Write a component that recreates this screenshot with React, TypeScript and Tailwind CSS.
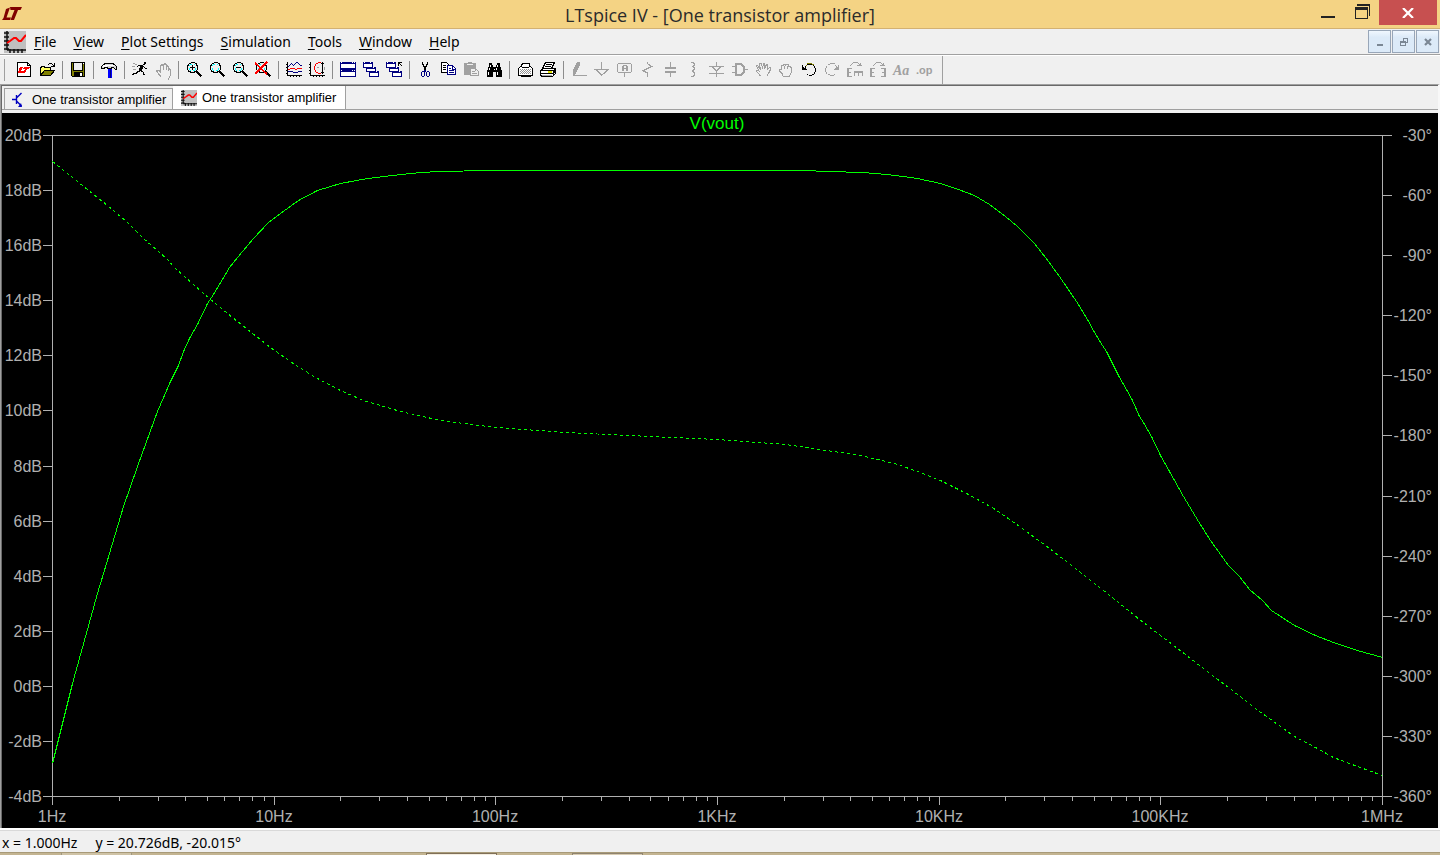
import type { ReactNode } from 'react';

interface Tool {
    label: string;
    icon: ReactNode;
    disabled?: boolean;
}

const GRAY = '#a0a0a0';
const NAVY = '#000080';

const Icon = ({ children }: { children: ReactNode }) => (
    <svg className="h-4 w-4" viewBox="0 0 16 16" fill="none" shapeRendering="crispEdges" overflow="visible" aria-hidden="true">
        {children}
    </svg>
);

const Lens = ({ children }: { children?: ReactNode }) => (
    <g transform="translate(1 0)">
        <path d="M3.5 .5h4M1.5 1.5h2M7.5 1.5h2M1.5 1.5v2M9.5 1.5v2M.5 3v5M10.5 3v5M1.5 8v2M9.5 8v2M2 9.5h2M7 9.5h2M3 10.5h5" stroke="#000" />
        <path d="M2 3h1v1h-1zM3 2h2v1h-2zM7 2h1v1h-1zM8 6h1v2h-1zM6 8h2v1h-2zM2 6h1v2h-1zM3 8h1v1h-1z" fill="#00ffff" />
        <path d="M9.5 9.5l5 5" stroke="#000" strokeWidth="2.4" />
        {children}
    </g>
);

const Cascade = () => (
    <>
        <path d="M.5 .5h9v5h-9zM3.5 5.5h9v4h-9zM6.5 9.5h9v5h-9z" fill="#fff" stroke={NAVY} />
        <path d="M0 0h10v2h-10zM3 5h10v2h-10zM6 9h10v2h-10z" fill={NAVY} />
        <path d="M1 .5h1M7 .5h1M10 5.5h1M13 9.5h1" stroke="#fff" />
    </>
);

const openHand = (
    <path d="M5.5 15v-1l-1-1-1-1-1-2-1-1v-1h2l2 2v-7h1v-1h1v1h1v5v-6h1v-1h1v1h1v6v-5h1v1h1v5v-3h1v1h1v6l-1 2-1 2v1" stroke={GRAY} />
);

const toolGroups: Tool[][] = [
    [
        {
            label: 'New Schematic',
            icon: (
                <>
                    <path d="M1.5 .5h10l3 3v11h-13z" fill="#fff" stroke="#000" />
                    <path d="M11.5 .5v3h3" stroke="#000" />
                    <path d="M4 5h3l-2 4h3l-1 2h-5zM8 5h6l-1 2h-2l-2 4h-2l2-4h-2z" fill="#f00" />
                </>
            ),
        },
        {
            label: 'Open',
            icon: (
                <>
                    <path d="M1.5 13.5v-8h1v-1h3v1h6v3" fill="#ffff80" stroke="#000" />
                    <path d="M2 6h9v2h-6l-3 5z" fill="#ffff60" />
                    <path d="M1.5 13.5l4-5h10l-4 5z" fill="#808000" stroke="#000" />
                    <path d="M9 2.5h1M10 1.5h3M13 2.5h1M14 3.5h2M15.5 1v3M12 4.5h4" stroke="#000" />
                </>
            ),
        },
    ],
    [
        {
            label: 'Save',
            icon: (
                <>
                    <path d="M1.5 .5h13v14h-12l-1-1z" fill="#808000" stroke="#000" />
                    <path d="M4 1h8v7h-8z" fill="#efefef" />
                    <path d="M3.5 1v7h9v-7" stroke="#000" />
                    <path d="M4 10h9v5h-9z" fill="#000" />
                    <path d="M10 11h2v3h-2z" fill="#fff" />
                    <path d="M13 1h1v1h-1z" fill="#fff" />
                </>
            ),
        },
    ],
    [
        {
            label: 'Control Panel',
            icon: (
                <>
                    <path d="M.5 4.5l2-2 2-1h7l2 1 2 2v3h-1l-2-2h-2v1h-4v-1h-2l-2 1h-2z" fill="#d8d8d8" stroke="#000" />
                    <path d="M2 3.5h11M2 4.5h4" stroke="#fff" />
                    <path d="M7 7h4v9h-4z" fill="#00f" />
                    <path d="M9.5 7v9" stroke="#000080" />
                </>
            ),
        },
    ],
    [
        {
            label: 'Run',
            icon: (
                <>
                    <path d="M12 0h2v2h-2z" fill="#000" />
                    <path d="M11 2.5h2M6 3.5h5M8 4.5h4M8 5.5h3M7 6.5h4M7 7.5h3M7 8.5h3M5 4.5h1M12 5.5h1M13 6.5h2M9 9.5h2M11.5 10v3M11 12.5h2M5 9.5h3M4 10.5h2M1 11.5h4M0 12.5h2" stroke="#000" />
                    <path d="M1 1.5h2M3 2.5h2M0 4.5h3M1 7.5h3" stroke={GRAY} />
                </>
            ),
        },
        { label: 'Halt', disabled: true, icon: openHand },
    ],
    [
        {
            label: 'Zoom In',
            icon: (
                <Lens>
                    <path d="M3 5.5h5M5.5 3v5" stroke="#000" />
                </Lens>
            ),
        },
        { label: 'Pan', icon: <Lens /> },
        {
            label: 'Zoom Out',
            icon: (
                <Lens>
                    <path d="M3 5.5h5" stroke="#000" />
                </Lens>
            ),
        },
        {
            label: 'Zoom to Fit',
            icon: (
                <Lens>
                    <path d="M-1 1l12 11M11 0l-12 12" stroke="#f00" strokeWidth="1.6" />
                </Lens>
            ),
        },
    ],
    [
        {
            label: 'Autorange',
            icon: (
                <>
                    <path d="M1.5 0v14M1 13.5h15M0 2.5h2M0 5.5h2M0 8.5h2M0 11.5h2M4.5 13v2M7.5 13v2M10.5 13v2M13.5 13v2" stroke="#000" />
                    <path d="M2 4.5h1M3 3.5h1M4 2.5h1M5 1.5h1M6 2.5h1M7 3.5h1M8 2.5h1M9 1.5h1M10 .5h2M12 1.5h1M13 2.5h1M14 3.5h2" stroke={NAVY} />
                    <path d="M2 7.5h2M4 6.5h5M9 7.5h2M11 6.5h5" stroke="#f00" />
                    <path d="M2 9.5h5M7 10.5h5M12 9.5h4" stroke={NAVY} />
                </>
            ),
        },
        {
            label: 'Toggle Axes',
            icon: (
                <>
                    <path d="M1.5 0v14M1 13.5h15M0 2.5h2M0 5.5h2M0 8.5h2M0 11.5h2M4.5 13v2M7.5 13v2M10.5 13v2M13.5 13v2M13.5 0v12M12 1.5h3M12 10.5h3" stroke="#000" />
                    <path d="M12 .5h-3M9 1.5h-2M7 2.5h-1M6.5 3v1M5.5 4v4M6.5 8v2M7 10.5h2M9 11.5h3" stroke="#f00" />
                    <path d="M8 5.5h2M15.5 5v3" stroke={GRAY} />
                </>
            ),
        },
    ],
    [
        {
            label: 'Tile',
            icon: (
                <>
                    <path d="M.5 .5h15v6h-15zM.5 7.5h15v7h-15z" fill="#fff" stroke={NAVY} />
                    <path d="M0 0h16v2h-16zM0 7h16v3h-16z" fill={NAVY} />
                    <path d="M1 .5h1M12 .5h1M14 .5h1M1 8.5h1M12 8.5h1M14 8.5h1" stroke="#fff" />
                </>
            ),
        },
        { label: 'Cascade', icon: <Cascade /> },
        {
            label: 'Close All',
            icon: (
                <>
                    <Cascade />
                    <path d="M11 0h5v5h-3v-2h-2z" fill="#f0f0f0" />
                    <path d="M12 .5h4M12.5 0v4M13 1.5h1M14 2.5h1M15 3.5h1" stroke="#000" />
                </>
            ),
        },
    ],
    [
        {
            label: 'Cut',
            icon: (
                <>
                    <path d="M5.5 0v3M6.5 2v3M7.5 4v4M10.5 0v3M9.5 2v3M8.5 4v4" stroke="#000" />
                    <path d="M7.5 8v2M8.5 8v2M5 9.5h2M4.5 10v4M5 14.5h2M7.5 10v4M10 9.5h2M9.5 10v4M12.5 10v4M10 14.5h2" stroke={NAVY} />
                </>
            ),
        },
        {
            label: 'Copy',
            icon: (
                <>
                    <path d="M1.5 .5h5l2 2v8h-7z" fill="#fff" stroke="#000" />
                    <path d="M3 3.5h3M3 5.5h3M3 7.5h3" stroke="#000" />
                    <path d="M7.5 3.5h5l3 3v6h-8z" fill="#fff" stroke={NAVY} />
                    <path d="M12.5 3v4h3M9 6.5h2M9 8.5h5M9 10.5h5" stroke={NAVY} />
                </>
            ),
        },
        {
            label: 'Paste',
            disabled: true,
            icon: (
                <>
                    <path d="M1 1h4v-1h4v1h4v12h-12z" fill={GRAY} />
                    <path d="M4 2.5h6" stroke="#efefef" />
                    <path d="M7.5 6.5h5l3 3v4h-8z" fill="#efefef" stroke={GRAY} />
                    <path d="M9 9.5h3M9 11.5h5M12.5 7v2" stroke={GRAY} />
                </>
            ),
        },
        {
            label: 'Find',
            icon: (
                <>
                    <path d="M3 1h3v2h1v2h3v-2h1v-2h3v3l2 5v6h-6v-5h-3v5h-6v-6l2-5z" fill="#000" />
                    <path d="M4.5 3v2M3.5 6v2M2.5 10v3M11.5 3v2M10.5 6v2M11.5 10v3M8 7.5h1" stroke="#fff" />
                </>
            ),
        },
    ],
    [
        {
            label: 'Print Setup',
            icon: (
                <>
                    <path d="M4.5 6v-4h1v-1h6l1 1v4" fill="#fff" stroke="#000" />
                    <path d="M1.5 6.5l2-2h10l2 2v7h-14z" fill="#fff" stroke="#000" />
                    <path d="M5 3h7v3h-7z" fill="#fff" />
                    <path d="M3 7.5h11M3 9.5h11M3 11.5h11" stroke="#909090" strokeDasharray="1 1" />
                    <path d="M4 8.5h10M4 10.5h10" stroke="#909090" strokeDasharray="1 1" />
                    <path d="M4 14.5h10M4.5 5.5h7" stroke="#000" />
                </>
            ),
        },
        {
            label: 'Print',
            icon: (
                <>
                    <path d="M5.5 .5h9l-3 6h-9z" fill="#fff" stroke="#000" />
                    <path d="M6 2.5h6M5 4.5h6" stroke="#000" />
                    <path d="M.5 8.5l3-2h12v5l-3 3h-11l-1-2z" fill="#fff" stroke="#000" />
                    <path d="M1 8.5h12M1 11.5h12M13.5 8v5M14.5 7v4" stroke="#000" />
                    <path d="M8 9h4v2h-4z" fill="#e0e000" />
                    <path d="M2 13.5h10" stroke={GRAY} />
                </>
            ),
        },
    ],
    [
        {
            label: 'Wire',
            disabled: true,
            icon: (
                <>
                    <path d="M6 0h3v3l-4 8-3 3v-6z" fill={GRAY} />
                    <path d="M2 13.5h14" stroke={GRAY} />
                </>
            ),
        },
        {
            label: 'Ground',
            disabled: true,
            icon: <path d="M7.5 0v7M0 7.5h15M2 8.5h2M3 9.5h2M4 10.5h2M5 11.5h2M6 12.5h3M7 13.5h1M9 11.5h2M10 10.5h2M11 9.5h2M12 8.5h2" stroke={GRAY} />,
        },
        {
            label: 'Label Net',
            disabled: true,
            icon: (
                <>
                    <path d="M1 1.5h13M1 10.5h13M.5 2v8M14.5 2v8M7.5 11v4" stroke={GRAY} />
                    <path d="M5 4h2v5h-2zM9 4h2v5h-2zM6 3h4v1h-4zM7 6h2v1h-2z" fill={GRAY} />
                </>
            ),
        },
        {
            label: 'Resistor',
            disabled: true,
            icon: <path d="M7.5 0v2M8 2.5h2M9 3.5h2M10 4.5h3M8 5.5h3M6 6.5h3M4 7.5h3M2 8.5h3M3 9.5h3M5 10.5h3M7.5 11v4" stroke={GRAY} />,
        },
        {
            label: 'Capacitor',
            disabled: true,
            icon: (
                <>
                    <path d="M7.5 0v5M7.5 10v5" stroke={GRAY} />
                    <path d="M2 6h11M2 10h11" stroke={GRAY} strokeWidth="2" />
                </>
            ),
        },
        {
            label: 'Inductor',
            disabled: true,
            icon: <path d="M5 .5h3M7 1.5h2M8 2.5h1M7 3.5h2M6 4.5h2M7 5.5h2M8 6.5h1M7 7.5h2M6 8.5h2M6 9.5h2M7 10.5h2M8 11.5h1M8 12.5h1M7 13.5h2M5 14.5h3" stroke={GRAY} />,
        },
        {
            label: 'Diode',
            disabled: true,
            icon: (
                <>
                    <path d="M7.5 0v4M7.5 12v3M0 4h15M0 11.5h15" stroke={GRAY} />
                    <path d="M2 4h11v1h-1v1h-1v1h-1v1h-1v1h-1v2h-1v-2h-1v-1h-1v-1h-1v-1h-1v-1h-1z" fill={GRAY} />
                    <path d="M5 5h5v1h-1v1h-1v1h-1v-1h-1v-1h-1z" fill="#f0f0f0" />
                </>
            ),
        },
        {
            label: 'Component',
            disabled: true,
            icon: (
                <>
                    <path d="M0 4.5h4M0 10.5h4M12 7.5h4" stroke={GRAY} />
                    <path d="M4 2h5l3 3v5l-3 3h-5z" stroke={GRAY} strokeWidth="1.6" />
                </>
            ),
        },
        {
            label: 'Move',
            disabled: true,
            icon: <path d="M5.5 14.5l-1-2-3-3v-1h2l1 1-3-5v-1h1l3 4-1-6h2l1 5 1-5h1v5l2-4h1v5l2-2h1v2l-2 4-2 3" stroke={GRAY} />,
        },
        {
            label: 'Drag',
            disabled: true,
            icon: <path d="M4.5 14v-2l-3-3v-2h2v-4h2v-1h2v1l1-1h2v2h2v1h1v5l-1 2-1 2v1zM6.5 4v3M9.5 4v3" stroke={GRAY} />,
        },
        {
            label: 'Undo',
            icon: (
                <g transform="translate(1 0)">
                    <path d="M2 6.5h1M3.5 4v2M5 2.5h5M11 3.5h1M12.5 4v2M13.5 6v4M12.5 10v2M10 12.5h2M7 13.5h3M5.5 12v1" stroke="#000" />
                    <path d="M4 3.5h1M5 1.5h5M10 2.5h2" stroke="#808000" />
                    <path d="M.5 3v5M1 7.5h4M2 6.5h2M1.5 5v2" stroke="#000" />
                </g>
            ),
        },
        {
            label: 'Redo',
            disabled: true,
            icon: <path d="M12.5 4v2M6 1.5h5M4 2.5h2M11 3.5h1M2.5 4v2M1.5 6v4M2.5 10v2M4 12.5h2M6 13.5h4M10.5 12v1M14.5 3v5M10 7.5h4M11 6.5h3M13.5 5v2" stroke={GRAY} />,
        },
        {
            label: 'Rotate',
            disabled: true,
            icon: (
                <>
                    <path d="M3 3.5h1M4 2.5h1M5 1.5h1M6 .5h5M11 1.5h1M12 2.5h1M13 3.5h1M10 3.5h5M13.5 1v3" stroke={GRAY} />
                    <path d="M0 6h2v9h-2zM2 6h3v1h-3zM2 10h2v1h-2zM2 14h3v1h-3zM7 9h9v2h-9zM7 11h1v3h-1zM11 11h1v3h-1zM15 11h1v3h-1z" fill={GRAY} />
                </>
            ),
        },
        {
            label: 'Mirror',
            disabled: true,
            icon: (
                <>
                    <path d="M3 3.5h1M4 2.5h1M5 1.5h1M6 .5h5M11 1.5h1M12 2.5h1M13 3.5h1M10 3.5h5M13.5 1v3" stroke={GRAY} />
                    <path d="M0 6h2v9h-2zM2 6h3v1h-3zM2 10h2v1h-2zM2 14h3v1h-3zM14 6h2v9h-2zM11 6h3v1h-3zM12 10h2v1h-2zM11 14h3v1h-3z" fill={GRAY} />
                </>
            ),
        },
        {
            label: 'Text',
            disabled: true,
            icon: (
                <text x="0" y="13" fill={GRAY} className="font-['Liberation_Serif',serif] text-[14px] font-bold italic">
                    Aa
                </text>
            ),
        },
        {
            label: 'SPICE Directive',
            disabled: true,
            icon: (
                <text x="0" y="12" fill={GRAY} className="font-['Liberation_Sans',sans-serif] text-[11px] font-bold">
                    .op
                </text>
            ),
        },
    ],
];

const menus = ['File', 'View', 'Plot Settings', 'Simulation', 'Tools', 'Window', 'Help'];

const gainLabels = ['20dB', '18dB', '16dB', '14dB', '12dB', '10dB', '8dB', '6dB', '4dB', '2dB', '0dB', '-2dB', '-4dB'];
const phaseLabels = ['-30°', '-60°', '-90°', '-120°', '-150°', '-180°', '-210°', '-240°', '-270°', '-300°', '-330°', '-360°'];
const freqLabels = ['1Hz', '10Hz', '100Hz', '1KHz', '10KHz', '100KHz', '1MHz'];

// plot area inside the waveform pane
const LEFT = 50;
const RIGHT = 1380;
const TOP = 22;
const BOTTOM = 683;
const DECADE = (RIGHT - LEFT) / 6;

const gainTrace =
    '50,650 70,570 95,480 107,440 121,393 135,353 155,298 168,268 176,252 181,238 187,225 195,211 205,190 211,181 227,154 235,144 251,125 266,109 278,100 296,87 315,77 338,70 365,65 390,62 418,59 438,58 485,57 798,57 858,59 874,60 893,62 915,65 938,70 956,76 972,82 987,91 1003,103 1015,113 1032,130 1043,144 1057,163 1074,188 1085,206 1092,219 1100,232 1104,238 1116,262 1124,276 1130,287 1137,303 1141,309 1149,323 1158,342 1167,358 1181,383 1196,408 1208,427 1226,452 1237,463 1247,476 1260,487 1269,497 1292,512 1313,522 1331,529 1355,537 1380,544';
const phaseTrace =
    '50,48 80,72 105,92 125,109 141,125 165,146 171,153 183,164 201,180 225,200 245,216 268,234 295,253 315,265 338,277 361,287 398,298 438,307 493,314 563,319 648,323 714,326 783,331 858,342 892,350 915,358 938,367 968,382 993,396 1017,413 1043,432 1073,455 1101,477 1137,506 1179,538 1206,559 1226,574 1257,598 1292,623 1313,634 1331,644 1355,653 1380,662';

function PlotIcon({ className }: { className: string }) {
    return (
        <svg className={className} viewBox="0 0 22 22" fill="none" aria-hidden="true">
            <path d="M0 0h22v22H0z" fill="#c0c0c0" />
            <path d="M3 0v19M3 19h19M0 2h5M0 6h5M0 10h5M0 14h5M0 18h5M6 18v4M10 18v4M14 18v4M18 18v4" stroke="#111" strokeWidth="1.5" />
            <path d="M3 12l3-2 4-3h2l3 3h2l5-6" stroke="#f00" strokeWidth="2" />
        </svg>
    );
}

function BodePlot() {
    return (
        <svg className="block h-auto w-full bg-black" viewBox="0 0 1436 715" fill="none" role="img" aria-label="V(vout)">
            <g stroke="#b0b0b0" shapeRendering="crispEdges">
                <path d="M41 22.5H1390M41 683.5H1390M50.5 22V692M1380.5 22V692" />
                {gainLabels.map((label, i) => {
                    const y = Math.round(TOP + ((BOTTOM - TOP) * i) / 12) + 0.5;
                    return <path key={label} d={`M41 ${y}H50`} />;
                })}
                {phaseLabels.map((label, i) => {
                    const y = Math.round(TOP + ((BOTTOM - TOP) * i) / 11) + 0.5;
                    return <path key={label} d={`M1380 ${y}H1390`} />;
                })}
                {freqLabels.slice(0, 6).map((label, d) =>
                    [1, 2, 3, 4, 5, 6, 7, 8, 9].map(n => {
                        const x = Math.round(LEFT + DECADE * (d + Math.log10(n))) + 0.5;
                        return <path key={label + n} d={`M${x} 683V${n === 1 ? 692 : 688}`} />;
                    })
                )}
            </g>
            <g fill="#b0b0b0" className="font-['Liberation_Sans',Arial,sans-serif] text-[16px]">
                {gainLabels.map((label, i) => (
                    <text key={label} x="40" y={Math.round(TOP + ((BOTTOM - TOP) * i) / 12) + 6} textAnchor="end">{label}</text>
                ))}
                {phaseLabels.map((label, i) => (
                    <text key={label} x="1430" y={Math.round(TOP + ((BOTTOM - TOP) * i) / 11) + 6} textAnchor="end">{label}</text>
                ))}
                {freqLabels.map((label, i) => (
                    <text key={label} x={Math.round(LEFT + DECADE * i)} y="709" textAnchor="middle">{label}</text>
                ))}
                <text x="715" y="16" fill="#00ff00" textAnchor="middle" className="text-[17px]">V(vout)</text>
            </g>
            {/* half a pixel down and right keeps flat runs of the trace on whole pixels */}
            <g stroke="#00ff00" shapeRendering="crispEdges" transform="translate(0.5 0.5)">
                <polyline points={gainTrace} />
                <polyline points={phaseTrace} strokeDasharray="3 3" />
            </g>
        </svg>
    );
}

function TitleBar() {
    return (
        <header className="grid h-[29px] grid-cols-[1fr_auto_1fr] items-center border-b border-[#d3b172] bg-[#f4d384] text-[#2b2b2b]">
            <svg className="ml-[2px] h-[14px] w-[20px]" viewBox="0 0 20 14" aria-hidden="true">
                <path d="M4 2L8 .5 4.5 10.5H9L8 13H0l1.5-2zM8 0h12l-1.5 3H16l-4 10H8.5l4-10H8.5z" fill="#800000" />
            </svg>
            <h1 className="pt-[2px] text-[18px] leading-6">LTspice IV - [One transistor amplifier]</h1>
            <div className="flex items-start justify-end self-start pr-[3px]">
                <button aria-label="Minimize" className="flex h-6 w-[34px] items-center justify-center">
                    <svg className="h-4 w-4" viewBox="0 0 16 16" aria-hidden="true">
                        <path d="M1 12h14v2H1z" fill="#222" />
                    </svg>
                </button>
                <button aria-label="Restore" className="flex h-6 w-[34px] items-center justify-center">
                    <svg className="h-4 w-4" viewBox="0 0 16 16" fill="none" shapeRendering="crispEdges" aria-hidden="true">
                        <path d="M1.5 4v10.5h12V4M15.5 0V12" stroke="#222" />
                        <path d="M1 3h13v3H1zM3 0h13v2H3z" fill="#222" />
                    </svg>
                </button>
                <button aria-label="Close" className="flex h-[25px] w-[58px] items-center justify-center bg-[#c75050]">
                    <svg className="h-[10px] w-[12px]" viewBox="0 0 12 10" fill="none" aria-hidden="true">
                        <path d="M1 0l10 10M11 0L1 10" stroke="#fff" strokeWidth="2.2" />
                    </svg>
                </button>
            </div>
        </header>
    );
}

function MenuBar() {
    const childButton = 'flex h-[23px] w-[23px] items-center justify-center border border-[#98a6b8] bg-linear-to-b from-[#f0f7fe] to-[#dceaf8] to-30%';
    return (
        <nav className="flex h-[26px] items-center border-b border-[#a0a0a0] pl-1">
            <PlotIcon className="h-[22px] w-[22px]" />
            <div className="flex flex-1 items-center gap-px font-['Noto_Sans',sans-serif] text-[14px] leading-5">
                {menus.map(name => (
                    <button key={name} className="px-2">
                        <span className="underline underline-offset-2">{name[0]}</span>
                        {name.slice(1)}
                    </button>
                ))}
            </div>
            <div className="flex gap-px pr-px">
                <button aria-label="Minimize child window" className={childButton}>
                    <svg className="h-3 w-3" viewBox="0 0 12 12" aria-hidden="true">
                        <path d="M3 8h6v2H3z" fill="#7b8794" />
                    </svg>
                </button>
                <button aria-label="Restore child window" className={childButton}>
                    <svg className="h-3 w-3" viewBox="0 0 12 12" fill="none" shapeRendering="crispEdges" aria-hidden="true">
                        <path d="M2.5 5.5h5v4h-5zM5.5 5V2.5h4v4H8" stroke="#7b8794" />
                        <path d="M2 5h6v2H2zM5 2h5v1H5z" fill="#7b8794" />
                    </svg>
                </button>
                <button aria-label="Close child window" className={childButton}>
                    <svg className="h-3 w-3" viewBox="0 0 12 12" fill="none" aria-hidden="true">
                        <path d="M3 3l6 6M9 3L3 9" stroke="#7b8794" strokeWidth="2.2" />
                    </svg>
                </button>
            </div>
        </nav>
    );
}

function Toolbar() {
    return (
        <div role="toolbar" aria-label="Main" className="flex h-[29px] border-t border-white">
            <div className="my-[3px] ml-[2px] w-[3px] border-r border-[#a0a0a0]" />
            <div className="flex items-center border-r border-[#a0a0a0] pr-[6px] pl-2">
                {toolGroups.map((tools, i) => (
                    <div key={i} className="flex items-center">
                        {i > 0 && <div className="mr-1 ml-[3px] h-[18px] w-px bg-[#8c8c8c]" />}
                        {tools.map(tool => (
                            <button key={tool.label} aria-label={tool.label} disabled={tool.disabled} className="flex h-[22px] w-[23px] items-center pl-[3px]">
                                <Icon>{tool.icon}</Icon>
                            </button>
                        ))}
                    </div>
                ))}
            </div>
        </div>
    );
}

function Tabs() {
    return (
        <div role="tablist" className="flex h-6 items-end border-b border-[#a0a0a0] pl-[2px] font-['Liberation_Sans',Arial,sans-serif] text-[13px] leading-4">
            <button role="tab" aria-selected="false" className="flex h-[21px] w-[169px] items-center border border-b-0 border-[#a0a0a0] pt-px pl-[6px] whitespace-nowrap">
                <svg className="mr-[5px] h-4 w-4" viewBox="0 0 16 16" fill="none" aria-hidden="true">
                    <path d="M5.5 3v9M1 7.5h4M5.5 6l5-5M5.5 9l5 5" stroke="#0000c0" strokeWidth="1.4" />
                    <path d="M11 15H7l3-4z" fill="#0000c0" />
                </svg>
                One transistor amplifier
            </button>
            <button role="tab" aria-selected="true" className="flex h-[23px] w-[173px] items-center border-r border-[#a0a0a0] bg-white pl-2 whitespace-nowrap">
                <PlotIcon className="mr-[5px] h-4 w-4" />
                One transistor amplifier
            </button>
        </div>
    );
}

export default function App() {
    return (
        <div className="flex min-h-screen flex-col bg-[#f0f0f0] font-['Open_Sans','Noto_Sans',sans-serif] text-black">
            <TitleBar />
            <MenuBar />
            <Toolbar />
            <main className="border-t border-r-2 border-l border-t-[#a0a0a0] border-r-[#f8f8f8] border-l-[#a0a0a0]">
                <div className="border-t border-l border-[#696969]">
                    <Tabs />
                    <div className="pt-[3px]">
                        <BodePlot />
                    </div>
                </div>
            </main>
            <footer className="flex h-6 items-center border-t-2 border-white bg-[#f0f0f0] pt-[3px] pl-[2px] font-['Noto_Sans',sans-serif] text-[14px] leading-5 shadow-[inset_0_1px_0_#d9d9d9]">
                <output className="flex gap-[18px]">
                    <span>x = 1.000Hz</span>
                    <span>y = 20.726dB, -20.015°</span>
                </output>
            </footer>
            <div className="flex h-[3px] border-t border-[#a89a78] bg-[#c3b491] pl-[61px]">
                <div className="w-[71px] border-x border-[#a09880] bg-[#cfc3a6]" />
                <div className="ml-[294px] w-[71px] border-x border-t border-[#807058] bg-[#f4eee0]" />
                <div className="ml-[75px] w-[71px] border-x border-t border-[#908470] bg-[#d8ccb2]" />
            </div>
        </div>
    );
}
